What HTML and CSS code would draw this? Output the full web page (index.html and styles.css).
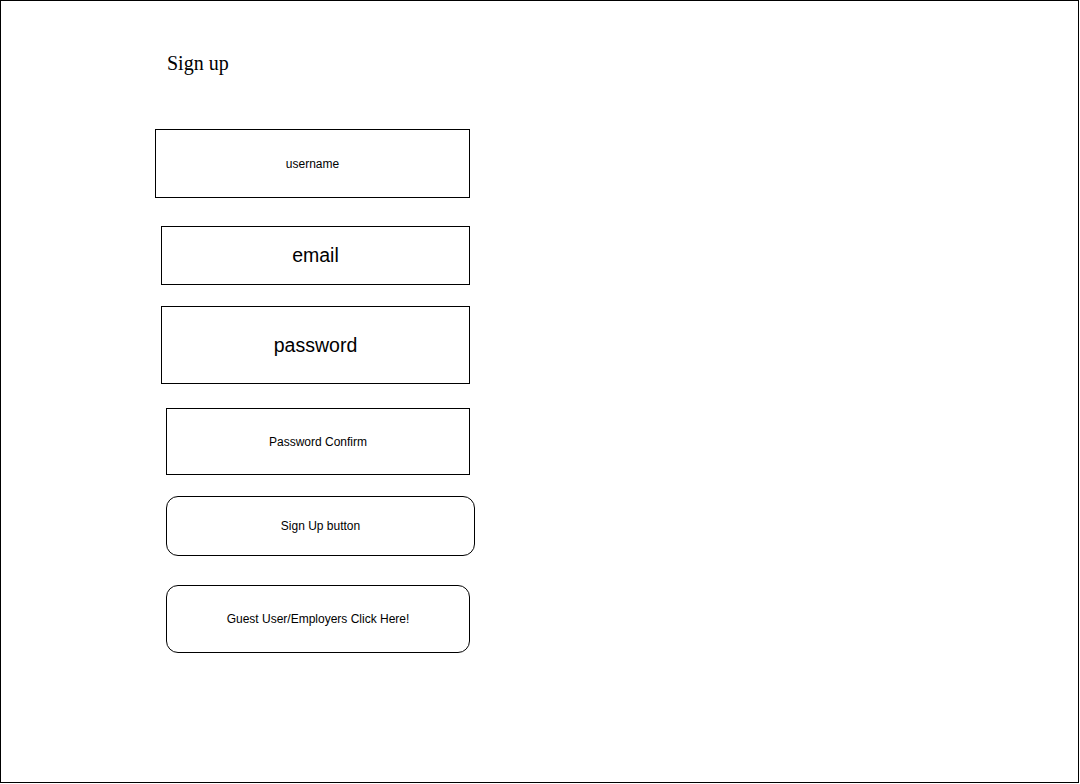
FILE: index.html
```html
<!DOCTYPE html>
<html lang="en">
<head>
<meta charset="utf-8">
<title>Sign up</title>
<link rel="stylesheet" href="styles.css">
</head>
<body>
<div class="frame">
  <h1 class="title">Sign up</h1>
  <div class="form">
    <div class="box box-username">username</div>
    <div class="box box-email big">email</div>
    <div class="box box-password big">password</div>
    <div class="box box-confirm">Password Confirm</div>
    <div class="box rounded box-signup">Sign Up button</div>
    <div class="box rounded box-guest">Guest User/Employers Click Here!</div>
  </div>
</div>
</body>
</html>
```

FILE: styles.css
```css
html, body {
  margin: 0;
  padding: 0;
  background: #fff;
}

.frame {
  box-sizing: border-box;
  width: 1079px;
  height: 783px;
  border: 1px solid #000;
  padding-top: 50px;
  background: #fff;
}

.title {
  margin: 0 0 0 166px;
  font-family: "Liberation Serif", "Times New Roman", serif;
  font-size: 20px;
  font-weight: normal;
  line-height: 24px;
  color: #000;
}

.form {
  display: flex;
  flex-direction: column;
  align-items: flex-start;
  margin-top: 54px;
}

.box {
  box-sizing: border-box;
  display: flex;
  align-items: center;
  justify-content: center;
  border: 1px solid #000;
  background: #fff;
  font-family: "Liberation Sans", Arial, sans-serif;
  font-size: 12px;
  color: #000;
}

.big {
  font-size: 19.5px;
}

.rounded {
  border-radius: 12px;
}

.box-username {
  margin-left: 154px;
  width: 315px;
  height: 69px;
}

.box-email {
  margin-top: 28px;
  margin-left: 160px;
  width: 309px;
  height: 59px;
}

.box-password {
  margin-top: 21px;
  margin-left: 160px;
  width: 309px;
  height: 78px;
}

.box-confirm {
  margin-top: 24px;
  margin-left: 165px;
  width: 304px;
  height: 67px;
}

.box-signup {
  margin-top: 21px;
  margin-left: 165px;
  width: 309px;
  height: 60px;
}

.box-guest {
  margin-top: 29px;
  margin-left: 165px;
  width: 304px;
  height: 68px;
}
```
